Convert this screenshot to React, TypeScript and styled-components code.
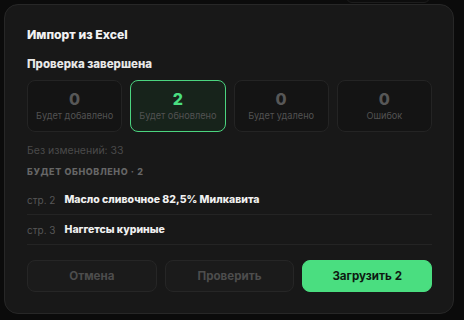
import React from "react";
import styled, { createGlobalStyle } from "styled-components";

const Global = createGlobalStyle`
  html, body { margin: 0; padding: 0; background: #0b0b0b; }
  body { font-family: Inter, "Noto Sans", "DejaVu Sans", sans-serif; -webkit-font-smoothing: antialiased; }
`;

const Page = styled.div`
  position: relative;
  width: 464px;
  height: 320px;
  padding: 4px;
  box-sizing: border-box;
  overflow: hidden;
`;

const Behind = styled.div`
  position: absolute;
  left: 346px;
  top: -30px;
  width: 82px;
  height: 31px;
  border: 1px solid #1d1d1d;
  border-radius: 6px;
  background: #0d0d0d;
`;

const Dialog = styled.div`
  position: relative;
  width: 450px;
  height: 310px;
  box-sizing: border-box;
  background: #181818;
  border: 1px solid #272727;
  border-radius: 14px;
  padding: 22px 21px 21px 22px;
  display: flex;
  flex-direction: column;
`;

const Title = styled.div`
  font-size: 12.2px;
  line-height: 16px;
  font-weight: 800;
  color: #f2f2f2;
`;

const Subtitle = styled.div`
  margin-top: 13px;
  font-size: 11.5px;
  line-height: 16px;
  font-weight: 800;
  color: #e8e8e8;
`;

const Stats = styled.div`
  margin-top: 8px;
  display: grid;
  grid-template-columns: repeat(4, 1fr);
  gap: 8px;
`;

const Stat = styled.div<{ $active?: boolean }>`
  height: 52px;
  box-sizing: border-box;
  border-radius: 8px;
  border: 1px solid ${(p) => (p.$active ? "#4bd47f" : "#242424")};
  background: ${(p) => (p.$active ? "#17231b" : "#141414")};
  display: flex;
  flex-direction: column;
  align-items: center;
  padding-top: 8px;
`;

const StatValue = styled.div<{ $active?: boolean }>`
  font-size: 16px;
  line-height: 20px;
  font-weight: 800;
  color: ${(p) => (p.$active ? "#4ade80" : "#575757")};
`;

const StatLabel = styled.div`
  margin-top: 1px;
  font-size: 9.2px;
  line-height: 12px;
  color: #525252;
`;

const Unchanged = styled.div`
  margin-top: 12px;
  font-size: 10.5px;
  line-height: 14px;
  color: #4a4a4a;
`;

const SectionHead = styled.div`
  margin-top: 8px;
  font-size: 9px;
  line-height: 12px;
  font-weight: 800;
  letter-spacing: 0.6px;
  color: #666666;
`;

const List = styled.div`
  margin-top: 7px;
  display: flex;
  flex-direction: column;
`;

const Row = styled.div`
  display: flex;
  align-items: center;
  gap: 9px;
  padding: 8px 0 7px;
  border-bottom: 1px solid #242424;
  line-height: 14px;
`;

const RowNum = styled.span`
  font-size: 10px;
  color: #575757;
`;

const RowName = styled.span`
  font-size: 10.5px;
  font-weight: 800;
  color: #f0f0f0;
`;

const Actions = styled.div`
  margin-top: 15px;
  display: grid;
  grid-template-columns: repeat(3, 1fr);
  gap: 8px;
`;

const Button = styled.button<{ $primary?: boolean }>`
  height: 32px;
  border-radius: 8px;
  font-family: inherit;
  font-size: 11.6px;
  font-weight: 700;
  border: 1px solid ${(p) => (p.$primary ? "#4ade80" : "#262626")};
  background: ${(p) => (p.$primary ? "#4ade80" : "#1b1b1b")};
  color: ${(p) => (p.$primary ? "#0e1a12" : "#4d4d4d")};
  padding: 0;
`;

const stats = [
  { value: 0, label: "Будет добавлено" },
  { value: 2, label: "Будет обновлено", active: true },
  { value: 0, label: "Будет удалено" },
  { value: 0, label: "Ошибок" },
];

const rows = [
  { n: 2, name: "Масло сливочное 82,5% Милкавита" },
  { n: 3, name: "Наггетсы куриные" },
];

export default function App() {
  return (
    <>
      <Global />
      <Page>
        <Behind />
        <Dialog>
          <Title>Импорт из Excel</Title>
          <Subtitle>Проверка завершена</Subtitle>
          <Stats>
            {stats.map((s) => (
              <Stat key={s.label} $active={s.active}>
                <StatValue $active={s.active}>{s.value}</StatValue>
                <StatLabel>{s.label}</StatLabel>
              </Stat>
            ))}
          </Stats>
          <Unchanged>Без изменений: 33</Unchanged>
          <SectionHead>БУДЕТ ОБНОВЛЕНО · 2</SectionHead>
          <List>
            {rows.map((r) => (
              <Row key={r.n}>
                <RowNum>стр. {r.n}</RowNum>
                <RowName>{r.name}</RowName>
              </Row>
            ))}
          </List>
          <Actions>
            <Button>Отмена</Button>
            <Button>Проверить</Button>
            <Button $primary>Загрузить 2</Button>
          </Actions>
        </Dialog>
      </Page>
    </>
  );
}
